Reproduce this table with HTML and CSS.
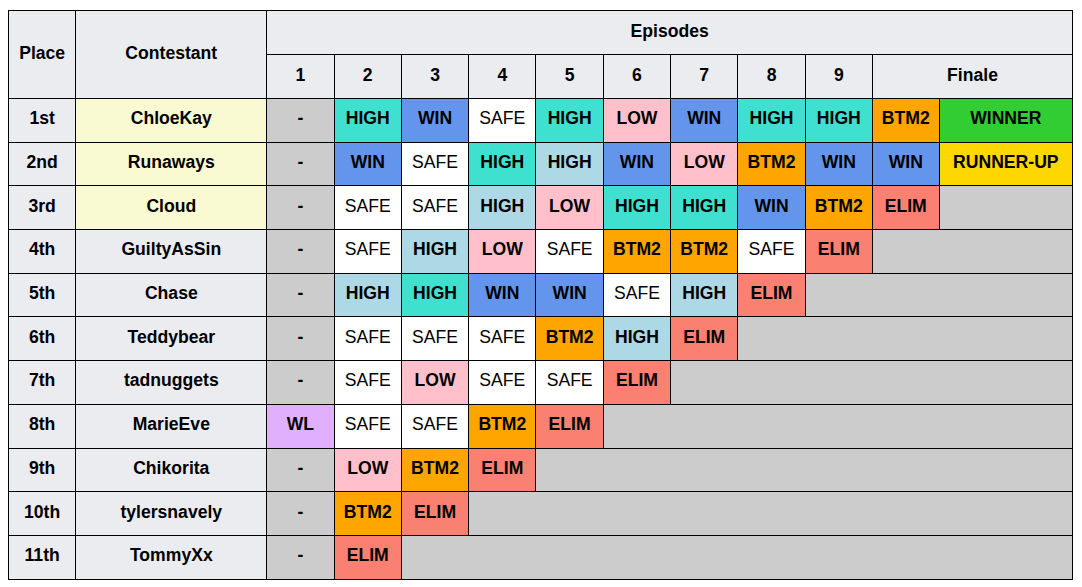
FILE: index.html
```html
<!DOCTYPE html>
<html>
<head>
<meta charset="utf-8">
<link rel="stylesheet" href="styles.css">
</head>
<body>
<table class="results">
  <colgroup>
    <col class="c-place"><col class="c-name">
    <col class="c-ep"><col class="c-ep"><col class="c-ep"><col class="c-ep"><col class="c-ep"><col class="c-ep"><col class="c-ep"><col class="c-ep"><col class="c-ep">
    <col class="c-f1"><col class="c-f2">
  </colgroup>
  <thead>
    <tr class="hrow">
      <th rowspan="2">Place</th>
      <th rowspan="2">Contestant</th>
      <th colspan="11">Episodes</th>
    </tr>
    <tr class="hrow">
      <th>1</th><th>2</th><th>3</th><th>4</th><th>5</th><th>6</th><th>7</th><th>8</th><th>9</th>
      <th colspan="2">Finale</th>
    </tr>
  </thead>
  <tbody>
    <tr>
      <th>1st</th><td class="name top">ChloeKay</td>
      <td class="na">-</td><td class="high">HIGH</td><td class="win">WIN</td><td class="safe">SAFE</td><td class="high">HIGH</td><td class="low">LOW</td><td class="win">WIN</td><td class="high">HIGH</td><td class="high">HIGH</td><td class="btm">BTM2</td><td class="winner">WINNER</td>
    </tr>
    <tr>
      <th>2nd</th><td class="name top">Runaways</td>
      <td class="na">-</td><td class="win">WIN</td><td class="safe">SAFE</td><td class="high">HIGH</td><td class="lhigh">HIGH</td><td class="win">WIN</td><td class="low">LOW</td><td class="btm">BTM2</td><td class="win">WIN</td><td class="win">WIN</td><td class="runner">RUNNER-UP</td>
    </tr>
    <tr>
      <th>3rd</th><td class="name top">Cloud</td>
      <td class="na">-</td><td class="safe">SAFE</td><td class="safe">SAFE</td><td class="lhigh">HIGH</td><td class="low">LOW</td><td class="high">HIGH</td><td class="high">HIGH</td><td class="win">WIN</td><td class="btm">BTM2</td><td class="elim">ELIM</td><td class="na"></td>
    </tr>
    <tr>
      <th>4th</th><td class="name">GuiltyAsSin</td>
      <td class="na">-</td><td class="safe">SAFE</td><td class="lhigh">HIGH</td><td class="low">LOW</td><td class="safe">SAFE</td><td class="btm">BTM2</td><td class="btm">BTM2</td><td class="safe">SAFE</td><td class="elim">ELIM</td><td class="na" colspan="2"></td>
    </tr>
    <tr>
      <th>5th</th><td class="name">Chase</td>
      <td class="na">-</td><td class="lhigh">HIGH</td><td class="high">HIGH</td><td class="win">WIN</td><td class="win">WIN</td><td class="safe">SAFE</td><td class="lhigh">HIGH</td><td class="elim">ELIM</td><td class="na" colspan="3"></td>
    </tr>
    <tr>
      <th>6th</th><td class="name">Teddybear</td>
      <td class="na">-</td><td class="safe">SAFE</td><td class="safe">SAFE</td><td class="safe">SAFE</td><td class="btm">BTM2</td><td class="lhigh">HIGH</td><td class="elim">ELIM</td><td class="na" colspan="4"></td>
    </tr>
    <tr>
      <th>7th</th><td class="name">tadnuggets</td>
      <td class="na">-</td><td class="safe">SAFE</td><td class="low">LOW</td><td class="safe">SAFE</td><td class="safe">SAFE</td><td class="elim">ELIM</td><td class="na" colspan="5"></td>
    </tr>
    <tr>
      <th>8th</th><td class="name">MarieEve</td>
      <td class="wl">WL</td><td class="safe">SAFE</td><td class="safe">SAFE</td><td class="btm">BTM2</td><td class="elim">ELIM</td><td class="na" colspan="6"></td>
    </tr>
    <tr>
      <th>9th</th><td class="name">Chikorita</td>
      <td class="na">-</td><td class="low">LOW</td><td class="btm">BTM2</td><td class="elim">ELIM</td><td class="na" colspan="7"></td>
    </tr>
    <tr>
      <th>10th</th><td class="name">tylersnavely</td>
      <td class="na">-</td><td class="btm">BTM2</td><td class="elim">ELIM</td><td class="na" colspan="8"></td>
    </tr>
    <tr>
      <th>11th</th><td class="name">TommyXx</td>
      <td class="na">-</td><td class="elim">ELIM</td><td class="na" colspan="9"></td>
    </tr>
  </tbody>
</table>
</body>
</html>
```

FILE: styles.css
```css
html, body {
  margin: 0;
  padding: 0;
  background: #ffffff;
}
body {
  padding: 10px 0 0 8px;
  font-family: "Liberation Sans", Arial, sans-serif;
  font-size: 17.6px;
  color: #000;
}
.results {
  border-collapse: collapse;
  table-layout: fixed;
  width: 1064px;
  border: 1px solid #000;
}
.c-place { width: 67.3px; }
.c-name { width: 191px; }
.c-ep { width: 67.3px; }
.c-f1 { width: 66.6px; }
.c-f2 { width: 133.4px; }

.results th,
.results td {
  border: 1px solid #000;
  padding: 0 0 3px 0;
  text-align: center;
  vertical-align: middle;
  font-weight: bold;
  white-space: nowrap;
}
.results th {
  background: #eaecf0;
}
.hrow {
  height: 44px;
}
.results tbody tr {
  height: 43.7px;
}
.name { background: #eaecf0; }
.name.top { background: #fafad2; }
.na { background: #cccccc; }
.safe { background: #ffffff; font-weight: normal !important; }
.high { background: #40e0d0; }
.lhigh { background: #add8e6; }
.win { background: #6495ed; }
.low { background: #ffc0cb; }
.btm { background: #ffa500; }
.elim { background: #fa8072; }
.winner { background: #32cd32; }
.runner { background: #ffd700; }
.wl { background: #e0b0ff; }
```
